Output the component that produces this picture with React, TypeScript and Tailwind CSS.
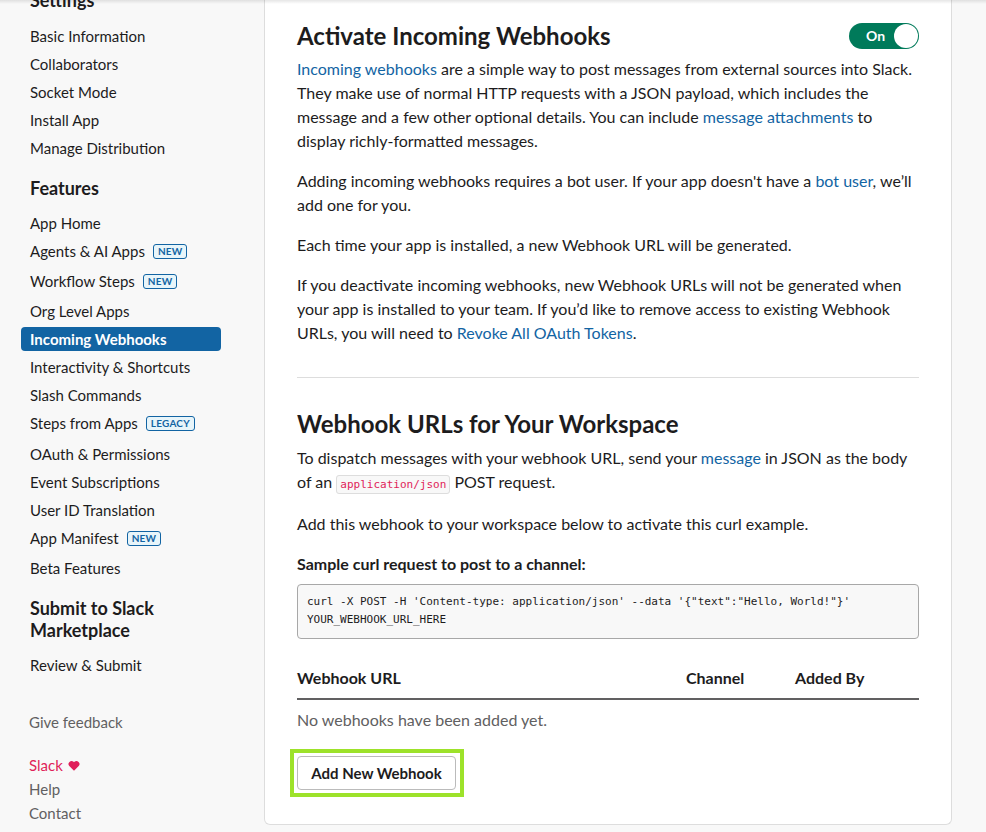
import React from "react";

type NavItem = {
  label: string;
  badge?: string;
  active?: boolean;
  pb?: string;
};

const settingsItems: NavItem[] = [
  { label: "Basic Information" },
  { label: "Collaborators" },
  { label: "Socket Mode" },
  { label: "Install App" },
  { label: "Manage Distribution" },
];

const featureItems: NavItem[] = [
  { label: "App Home" },
  { label: "Agents & AI Apps", badge: "NEW", pb: "pb-[2px]" },
  { label: "Workflow Steps", badge: "NEW", pb: "pb-[2px]" },
  { label: "Org Level Apps" },
  { label: "Incoming Webhooks", active: true },
  { label: "Interactivity & Shortcuts" },
  { label: "Slash Commands" },
  { label: "Steps from Apps", badge: "LEGACY", pb: "pb-[3px]" },
  { label: "OAuth & Permissions" },
  { label: "Event Subscriptions" },
  { label: "User ID Translation" },
  { label: "App Manifest", badge: "NEW", pb: "pb-[2px]" },
  { label: "Beta Features" },
];

function NavRow({ item }: { item: NavItem }) {
  return (
    <div className={item.pb}>
      <div className="flex h-[28px] items-center">
        {item.active ? (
          <div className="ml-[21px] flex h-[24px] w-[200px] items-center rounded-[4px] bg-[#1264a3] pl-[9px] text-[15px] font-bold text-white">
            {item.label}
          </div>
        ) : (
          <div className="flex items-center gap-2 pl-[30px] text-[15px] text-[#1d1c1d]">
            <span>{item.label}</span>
            {item.badge && (
              <span className="flex h-[15px] items-center rounded-[3px] border border-[#1264a3] bg-[#e8f5fa] px-[4px] text-[10px] font-bold leading-none tracking-[0.02em] text-[#1264a3]">
                {item.badge}
              </span>
            )}
          </div>
        )}
      </div>
    </div>
  );
}

function Sidebar() {
  return (
    <aside className="w-[264px] shrink-0">
      <div className="-mt-[12px] h-[24px] pl-[30px] text-[18px] font-bold leading-[24px] text-[#1d1c1d]">
        Settings
      </div>
      <div className="mt-[10px]">
        {settingsItems.map((it) => (
          <NavRow key={it.label} item={it} />
        ))}
      </div>
      <div className="mt-[14px] h-[24px] pl-[30px] text-[18px] font-bold leading-[24px] text-[#1d1c1d]">
        Features
      </div>
      <div className="mt-[9px]">
        {featureItems.map((it) => (
          <NavRow key={it.label} item={it} />
        ))}
      </div>
      <div className="mt-[15px] pl-[30px] text-[18px] font-bold leading-[22px] text-[#1d1c1d]">
        Submit to Slack
        <br />
        Marketplace
      </div>
      <div className="mt-[10px]">
        <NavRow item={{ label: "Review & Submit" }} />
      </div>
      <div className="mt-[29px] flex h-[28px] items-center pl-[29px] text-[15px] text-[#616061]">
        Give feedback
      </div>
      <div className="mt-[17px] pl-[29px] text-[15px] leading-[24px]">
        <div className="flex items-center gap-[5px] text-[#e01e5a]">
          Slack
          <svg width="12" height="11" viewBox="0 0 24 22" fill="#e01e5a">
            <path d="M12 21.5 2.6 12.2A6.1 6.1 0 0 1 11.2 3.6l.8.8.8-.8a6.1 6.1 0 0 1 8.6 8.6Z" />
          </svg>
        </div>
        <div className="text-[#616061]">Help</div>
        <div className="text-[#616061]">Contact</div>
      </div>
    </aside>
  );
}

function A({ children }: { children: React.ReactNode }) {
  return <span className="text-[#1264a3]">{children}</span>;
}

function Toggle() {
  return (
    <div className="flex h-[26px] w-[70px] items-center justify-between rounded-full bg-[#007a5a] pl-[17px] pr-[1px]">
      <span className="text-[14px] font-bold text-white">On</span>
      <span className="h-[24px] w-[24px] rounded-full bg-white" />
    </div>
  );
}

function Main() {
  return (
    <main className="w-[688px] shrink-0 self-start rounded-b-[6px] border-x border-b border-[#dddddd] bg-white px-[32px] pb-[27px] pt-[21px] text-[16px] leading-[24px] text-[#1d1c1d]">
      <div className="flex h-[30px] items-center justify-between">
        <h2 className="text-[24px] font-bold leading-[30px]">Activate Incoming Webhooks</h2>
        <Toggle />
      </div>
      <p className="mt-[6px]">
        <A>Incoming webhooks</A> are a simple way to post messages from external sources into Slack.
        They make use of normal HTTP requests with a JSON payload, which includes the message and a
        few other optional details. You can include <A>message attachments</A> to display
        richly-formatted messages.
      </p>
      <p className="mt-4">
        Adding incoming webhooks requires a bot user. If your app doesn't have a <A>bot user</A>,
        we’ll add one for you.
      </p>
      <p className="mt-4">Each time your app is installed, a new Webhook URL will be generated.</p>
      <p className="mt-4">
        If you deactivate incoming webhooks, new Webhook URLs will not be generated when your app is
        installed to your team. If you’d like to remove access to existing Webhook URLs, you will
        need to <A>Revoke All OAuth Tokens</A>.
      </p>

      <hr className="mt-[32px] border-t border-[#dddddd]" />

      <h2 className="mt-[31px] text-[24px] font-bold leading-[30px]">Webhook URLs for Your Workspace</h2>
      <p className="mt-[7px]">
        To dispatch messages with your webhook URL, send your <A>message</A> in JSON as the body of
        an{" "}
        <code className="rounded-[3px] border border-[#dddddd] bg-[#f8f8f8] px-[3px] py-[2px] font-['DejaVu_Sans_Mono',monospace] text-[11px] text-[#e01e5a]">
          application/json
        </code>{" "}
        POST request.
      </p>
      <p className="mt-[15px]">Add this webhook to your workspace below to activate this curl example.</p>
      <p className="mt-4 font-bold">Sample curl request to post to a channel:</p>
      <pre className="mt-[8px] h-[55px] rounded-[4px] border border-[#a8a8a8] bg-[#f8f8f8] px-[9px] pt-[8px] font-['DejaVu_Sans_Mono',monospace] text-[11px] leading-[18px] text-[#1d1c1d]">
        {`curl -X POST -H 'Content-type: application/json' --data '{"text":"Hello, World!"}'\nYOUR_WEBHOOK_URL_HERE`}
      </pre>

      <div className="mt-[27px] flex border-b-2 border-[#616061] pb-[8px] font-bold">
        <div className="w-[389px]">Webhook URL</div>
        <div className="w-[109px]">Channel</div>
        <div>Added By</div>
      </div>
      <p className="mt-[8px] text-[#616061]">No webhooks have been added yet.</p>

      <div className="-ml-[7px] mt-[17px] inline-block border-4 border-[#9de22a] py-[3px] pl-[3px] pr-[4px]">
        <button className="flex h-[34px] w-[159px] items-center justify-center rounded-[4px] border border-[#bbbbbb] bg-white text-[15px] font-bold text-[#1d1c1d]">
          Add New Webhook
        </button>
      </div>
    </main>
  );
}

export default function App() {
  return (
    <div className="relative flex h-[832px] w-[986px] overflow-hidden bg-[#f8f8f8] font-['Lato',sans-serif]">
      <Sidebar />
      <Main />
      <div className="pointer-events-none absolute inset-x-0 top-0 h-[4px] bg-gradient-to-b from-black/10 to-transparent" />
    </div>
  );
}
